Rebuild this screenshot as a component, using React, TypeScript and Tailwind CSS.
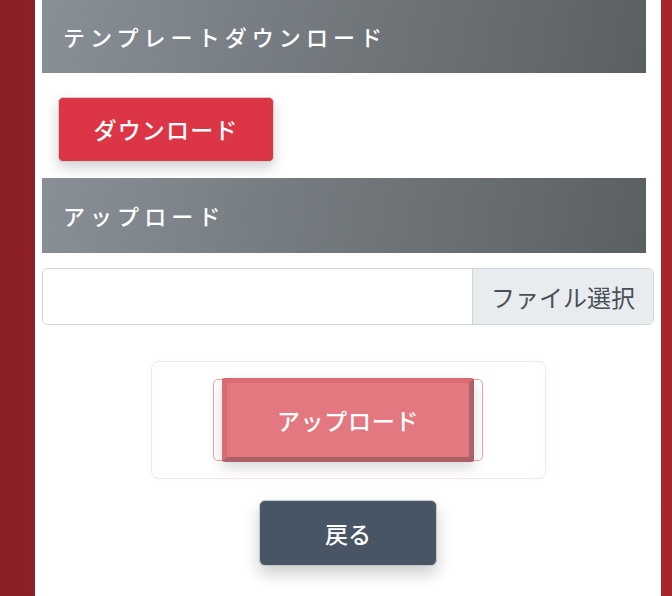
import React from "react";

const jp = { fontFamily: '"Noto Sans CJK JP", "Noto Sans", sans-serif' };

export default function App() {
  return (
    <div
      className="flex h-[596px] w-[672px] overflow-hidden bg-[linear-gradient(90deg,#8c1f27,#a9252a)]"
      style={jp}
    >
      <div className="ml-[35px] flex w-[626px] flex-col bg-white px-[7px]">
        <div className="flex h-[73px] w-[604px] items-center bg-[linear-gradient(100deg,#888f96,#5a6062)] pl-[21px] text-[22px] font-medium tracking-[0.23em] text-white">
          テンプレートダウンロード
        </div>
        <div className="pb-[16px] pl-[16px] pt-[24px]">
          <button className="flex h-[65px] w-[216px] items-center justify-center rounded-[5px] border border-[#cfcfcf] bg-[#dc3545] text-[23px] font-medium tracking-[0.05em] text-white shadow-[0_6px_14px_rgba(0,0,0,0.18)]">
            ダウンロード
          </button>
        </div>
        <div className="flex h-[75px] w-[604px] items-center bg-[linear-gradient(100deg,#888f96,#5a6062)] pl-[21px] text-[22px] font-medium tracking-[0.23em] text-white">
          アップロード
        </div>
        <div className="mt-[15px] flex h-[57px] w-[612px] overflow-hidden rounded-[6px] border border-[#ced4da]">
          <div className="flex-1 bg-white" />
          <div className="flex w-[181px] items-center justify-center border-l border-[#ced4da] bg-[#e9ecef] text-[24px] text-[#495057]">
            ファイル選択
          </div>
        </div>
        <div className="mx-auto mt-[36px] flex h-[118px] w-[395px] items-center justify-center rounded-[8px] border border-[#f9e3e4]">
          <div className="relative flex h-[84px] w-[270px] items-center justify-center">
            <div className="absolute inset-x-0 bottom-[1px] top-[1px] rounded-[5px] border border-[#e8a4a9]" />
            <button className="relative flex h-[84px] w-[252px] items-center justify-center rounded-[3px] border-[5px] border-b-[#ab6168] border-l-[#dc6a71] border-r-[#ab6168] border-t-[#dc6a71] bg-[#e47881] text-[23px] font-medium tracking-[0.03em] text-white shadow-[0_6px_14px_rgba(0,0,0,0.15)]">
              アップロード
            </button>
          </div>
        </div>
        <button className="mx-auto mt-[21px] flex h-[66px] w-[178px] items-center justify-center rounded-[6px] border border-[#c5c9ce] bg-[#485564] text-[23px] font-medium text-white shadow-[0_8px_16px_rgba(0,0,0,0.2)]">
          戻る
        </button>
      </div>
    </div>
  );
}
